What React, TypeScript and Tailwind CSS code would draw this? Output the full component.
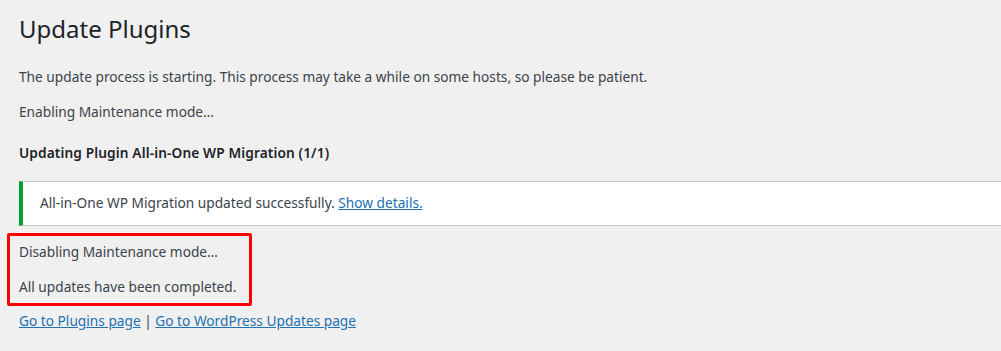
import React from "react";

export default function App() {
  const font = { fontFamily: '"Noto Sans", "Open Sans", sans-serif' };
  return (
    <div className="w-[1001px] h-[351px] bg-[#f0f0f1] overflow-hidden text-[#3c434a]" style={font}>
      <div className="pl-[19px] pt-[11px]">
        <h1 className="text-[24px] leading-[36px] text-[#1d2327] font-normal">Update Plugins</h1>
        <p className="mt-[20px] text-[13.7px] leading-[20px]">
          The update process is starting. This process may take a while on some hosts, so please be patient.
        </p>
        <p className="mt-[15px] text-[13.7px] leading-[20px]">Enabling Maintenance mode…</p>
        <h2 className="mt-[21px] text-[13.7px] leading-[20px] font-semibold tracking-[0.12px] text-[#1d2327]">
          Updating Plugin All-in-One WP Migration (1/1)
        </h2>
        <div className="mt-[18px] h-[45px] bg-white border-y border-[#c3c4c7] border-l-4 border-l-[#00a32a] flex items-center pl-[17px] text-[13.7px]">
          <span>
            All-in-One WP Migration updated successfully.{" "}
            <a className="text-[#2271b1] underline">Show details.</a>
          </span>
        </div>
      </div>
      <div className="ml-[7px] mt-[7px] w-[245px] h-[73px] border-[3px] border-[#ff0000] rounded-[2px] flex flex-col justify-center gap-[15px] pl-[9px] text-[13.7px] leading-[20px]">
        <p>Disabling Maintenance mode…</p>
        <p>All updates have been completed.</p>
      </div>
      <p className="pl-[19px] mt-[5px] text-[13.7px] leading-[20px]">
        <a className="text-[#2271b1] underline">Go to Plugins page</a> |{" "}
        <a className="text-[#2271b1] underline">Go to WordPress Updates page</a>
      </p>
    </div>
  );
}
